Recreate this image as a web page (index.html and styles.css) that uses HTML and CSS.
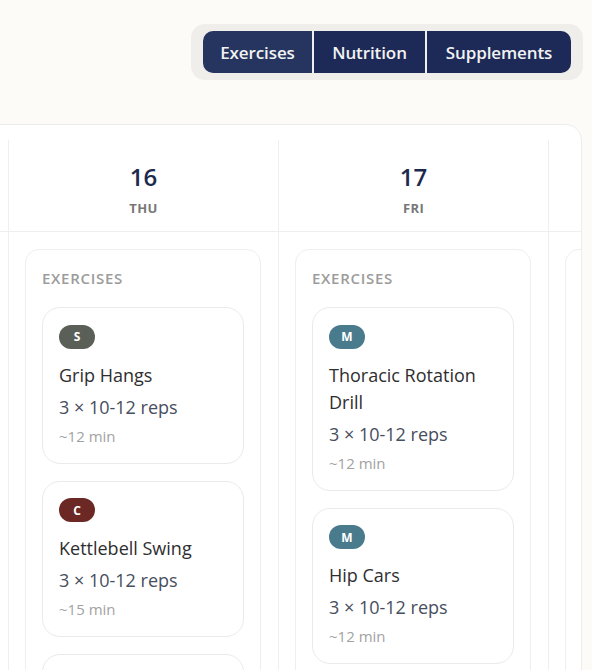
FILE: index.html
```html
<!DOCTYPE html>
<html lang="en">
<head>
<meta charset="utf-8">
<title>Weekly Plan</title>
<link rel="stylesheet" href="styles.css">
</head>
<body>
<div class="topbar">
  <div class="tabs">
    <button class="tab tab-active">Exercises</button>
    <button class="tab">Nutrition</button>
    <button class="tab">Supplements</button>
  </div>
</div>

<div class="board">
  <div class="cols">
    <div class="col">
      <div class="col-head"><div class="date">15</div><div class="dow">WED</div></div>
      <div class="col-body">
        <div class="section"><div class="section-label">EXERCISES</div></div>
      </div>
    </div>

    <div class="col">
      <div class="col-head"><div class="date">16</div><div class="dow">THU</div></div>
      <div class="col-body">
        <div class="section">
          <div class="section-label">EXERCISES</div>
          <div class="cards">
            <div class="card">
              <span class="badge badge-s">S</span>
              <div class="title">Grip Hangs</div>
              <div class="reps">3 × 10-12 reps</div>
              <div class="dur">~12 min</div>
            </div>
            <div class="card">
              <span class="badge badge-c">C</span>
              <div class="title">Kettlebell Swing</div>
              <div class="reps">3 × 10-12 reps</div>
              <div class="dur">~15 min</div>
            </div>
            <div class="card">
              <span class="badge badge-m">M</span>
              <div class="title">Cat-Cow Stretch</div>
              <div class="reps">3 × 10-12 reps</div>
              <div class="dur">~10 min</div>
            </div>
          </div>
        </div>
      </div>
    </div>

    <div class="col">
      <div class="col-head"><div class="date">17</div><div class="dow">FRI</div></div>
      <div class="col-body">
        <div class="section">
          <div class="section-label">EXERCISES</div>
          <div class="cards">
            <div class="card">
              <span class="badge badge-m">M</span>
              <div class="title">Thoracic Rotation Drill</div>
              <div class="reps">3 × 10-12 reps</div>
              <div class="dur">~12 min</div>
            </div>
            <div class="card">
              <span class="badge badge-m">M</span>
              <div class="title">Hip Cars</div>
              <div class="reps">3 × 10-12 reps</div>
              <div class="dur">~12 min</div>
            </div>
          </div>
        </div>
      </div>
    </div>

    <div class="col">
      <div class="col-head"><div class="date">18</div><div class="dow">SAT</div></div>
      <div class="col-body">
        <div class="section">
          <div class="section-label">EXERCISES</div>
        </div>
      </div>
    </div>
  </div>
</div>
</body>
</html>
```

FILE: styles.css
```css
* { box-sizing: border-box; }

html, body {
  margin: 0;
  padding: 0;
  height: 670px;
  overflow: hidden;
}

body {
  background: #fdfbf7;
  font-family: "Open Sans", "Noto Sans", sans-serif;
  color: #333;
}

.topbar {
  display: flex;
  justify-content: flex-end;
  padding: 24px 9px 0 0;
}

.tabs {
  display: flex;
  gap: 2px;
  padding: 7px 12px;
  background: #efeeeb;
  border-radius: 14px;
}

.tab {
  height: 42px;
  padding: 0 16px;
  border: none;
  background: #1d2a57;
  color: #f2f2f2;
  font-family: "Open Sans", "Noto Sans", sans-serif;
  font-size: 17px;
  font-weight: 600;
  letter-spacing: -0.1px;
}

.tab:nth-child(1) { width: 109px; }
.tab:nth-child(2) { width: 111px; }
.tab:nth-child(3) { width: 144px; }

.tab:first-child { border-radius: 10px 0 0 10px; }
.tab:last-child { border-radius: 0 10px 10px 0; }

.tab-active { background: #25355f; }

.board {
  margin: 44px 10px 0 -20px;
  height: 700px;
  background: #fff;
  border: 1px solid #efedea;
  border-radius: 16px;
  overflow: hidden;
  padding-top: 15px;
}

.cols {
  display: flex;
  margin-left: -242px;
  height: 100%;
}

.col {
  flex: 0 0 270px;
  border-right: 1px solid #f0efed;
}

.col-head {
  height: 92px;
  border-bottom: 1px solid #f0efed;
  display: flex;
  flex-direction: column;
  align-items: center;
  padding-top: 20px;
}

.date {
  font-size: 24px;
  font-weight: 600;
  line-height: 34px;
  color: #1c2a4d;
}

.dow {
  font-size: 13px;
  font-weight: 700;
  line-height: 18px;
  color: #777;
  letter-spacing: 0.4px;
  margin-top: 5px;
}

.col-body {
  padding: 17px 17px 0 16px;
}

.section {
  border: 1px solid #efeeec;
  border-radius: 14px;
  padding: 18px 16px 16px;
  min-height: 500px;
}

.section-label {
  font-size: 15px;
  font-weight: 600;
  letter-spacing: 0.7px;
  color: #9c9c9c;
  line-height: 20px;
}

.cards {
  margin-top: 19px;
  display: flex;
  flex-direction: column;
  gap: 17px;
}

.card {
  border: 1px solid #eaeaea;
  border-radius: 18px;
  padding: 16px 16px 16px;
}

.badge {
  display: inline-flex;
  align-items: center;
  justify-content: center;
  width: 36px;
  height: 24px;
  border-radius: 12px;
  color: #fff;
  font-size: 12px;
  font-weight: 700;
}

.badge-s { background: #5a5f57; }
.badge-c { background: #6b2824; }
.badge-m { background: #4a7b8c; }

.title {
  margin-top: 13px;
  font-size: 18px;
  font-weight: 500;
  line-height: 27px;
  color: #2e2e2e;
}

.reps {
  margin-top: 5px;
  font-size: 18px;
  font-weight: 500;
  line-height: 27px;
  color: #474e5e;
}

.dur {
  margin-top: 4px;
  font-size: 15px;
  line-height: 22px;
  color: #a2a2a2;
}
```
